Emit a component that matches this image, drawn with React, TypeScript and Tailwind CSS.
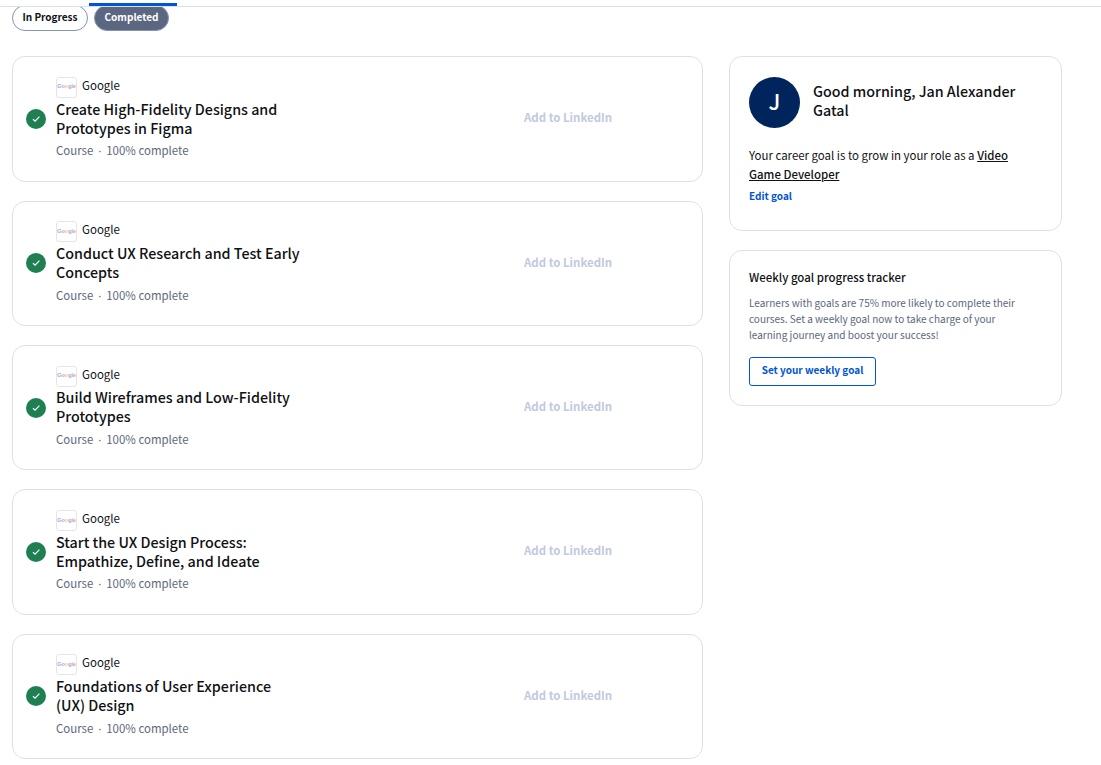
const courses = [
  ["Create High-Fidelity Designs and", "Prototypes in Figma"],
  ["Conduct UX Research and Test Early", "Concepts"],
  ["Build Wireframes and Low-Fidelity", "Prototypes"],
  ["Start the UX Design Process:", "Empathize, Define, and Ideate"],
  ["Foundations of User Experience", "(UX) Design"],
];

function GoogleLogo() {
  return (
    <span className="flex h-[21px] w-[21px] items-center justify-center rounded-[3px] border border-[#e1e1e1] bg-white font-['Liberation_Sans',sans-serif] text-[5.8px] leading-none font-bold tracking-[-0.2px] opacity-85">
      <span className="text-[#7ba2f6]">G</span>
      <span className="text-[#f08a80]">o</span>
      <span className="text-[#f8c968]">o</span>
      <span className="text-[#7ba2f6]">g</span>
      <span className="text-[#8fc99e]">l</span>
      <span className="text-[#f08a80]">e</span>
    </span>
  );
}

function CourseCard({ title }: { title: string[] }) {
  return (
    <article className="flex h-[125.4px] w-[691px] items-center rounded-[13px] border border-[#dae1ed] pl-[13px]">
      <span className="flex h-5 w-5 shrink-0 items-center justify-center rounded-full bg-[#1f7f52]">
        <svg viewBox="0 0 20 20" className="h-5 w-5" fill="none" stroke="white" strokeWidth="1.2">
          <path d="M7 10.2 L9.1 12.2 L13.4 7.7" />
        </svg>
      </span>
      <div className="ml-[10px] w-[468px] shrink-0">
        <div className="flex h-[21px] items-start gap-[5px]">
          <GoogleLogo />
          <span className="text-[11.5px] leading-[17.4px]">Google</span>
        </div>
        <h3 className="mt-[0.7px] text-[14.3px] leading-[19px] font-medium whitespace-nowrap">
          {title[0]}
          <br />
          {title[1]}
        </h3>
        <p className="mt-[4.6px] mb-[0.7px] flex text-[11.45px] leading-[19px] text-[#5b6780]">
          <span>Course</span>
          <span className="w-[13px] text-center font-['Noto_Sans',sans-serif]">·</span>
          <span>100% complete</span>
        </p>
      </div>
      <span className="mb-[3.3px] text-[11.45px] leading-5 font-bold whitespace-nowrap text-[#c1cade]">Add to LinkedIn</span>
    </article>
  );
}

export default function App() {
  return (
    <div className="h-[765px] w-[1101px] overflow-hidden bg-white font-['Noto_Sans_CJK_SC',sans-serif] text-[#0f1114]">
      <div className="flex h-[7px] flex-col border-b border-[#dae1ed]">
        <div className="mt-[3px] ml-[89px] h-[3px] w-[88px] shrink-0 bg-[#0056d2]" />
      </div>
      <div className="flex h-[49.2px] items-start gap-[6px] overflow-hidden pl-3 text-[10px] leading-[22px] font-bold">
        <button className="-mt-[2px] h-[26px] w-[76px] rounded-full border border-[#8495b0] pb-[2px]">In Progress</button>
        <button className="-mt-[2px] h-[26px] w-[75px] rounded-full border border-[#8495b0] bg-[#5b6780] pb-[2px] text-white">Completed</button>
      </div>
      <div className="flex items-start gap-[26px] pl-3">
        <main className="flex flex-col gap-[19px]">
          {courses.map((c) => (
            <CourseCard key={c[0]} title={c} />
          ))}
        </main>
        <aside className="flex w-[333px] flex-col gap-[19px]">
          <section className="h-[175px] rounded-[13px] border border-[#dae1ed] px-[19px] pt-5">
            <div className="flex items-center gap-[13px]">
              <span className="flex h-[51px] w-[51px] items-center justify-center rounded-full bg-[#00255d] pb-[3px] text-[21.5px] font-medium text-white">J</span>
              <h2 className="mb-[6px] text-[14.3px] leading-[19px] font-medium whitespace-nowrap">
                Good morning, Jan Alexander
                <br />
                Gatal
              </h2>
            </div>
            <p className="mt-[18px] text-[11.45px] leading-[19px] whitespace-nowrap">
              Your career goal is to grow in your role as a <a className="font-medium underline">Video</a>
              <br />
              <a className="font-medium underline">Game Developer</a>
            </p>
            <a className="mt-[4px] block text-[10px] leading-4 font-bold text-[#0056d2]">Edit goal</a>
          </section>
          <section className="h-[156px] rounded-[13px] border border-[#dae1ed] px-[19px] pt-4">
            <h3 className="text-[11.45px] leading-5 font-medium">Weekly goal progress tracker</h3>
            <p className="mt-[8px] text-[10.02px] leading-4 whitespace-nowrap text-[#5b6780]">
              Learners with goals are 75% more likely to complete their
              <br />
              courses. Set a weekly goal now to take charge of your
              <br />
              learning journey and boost your success!
            </p>
            <button className="mt-[14px] h-[29px] w-[127px] rounded-[3px] border border-[#0056d2] pb-[3px] text-[10px] leading-6 font-bold text-[#0056d2]">
              Set your weekly goal
            </button>
          </section>
        </aside>
      </div>
    </div>
  );
}
